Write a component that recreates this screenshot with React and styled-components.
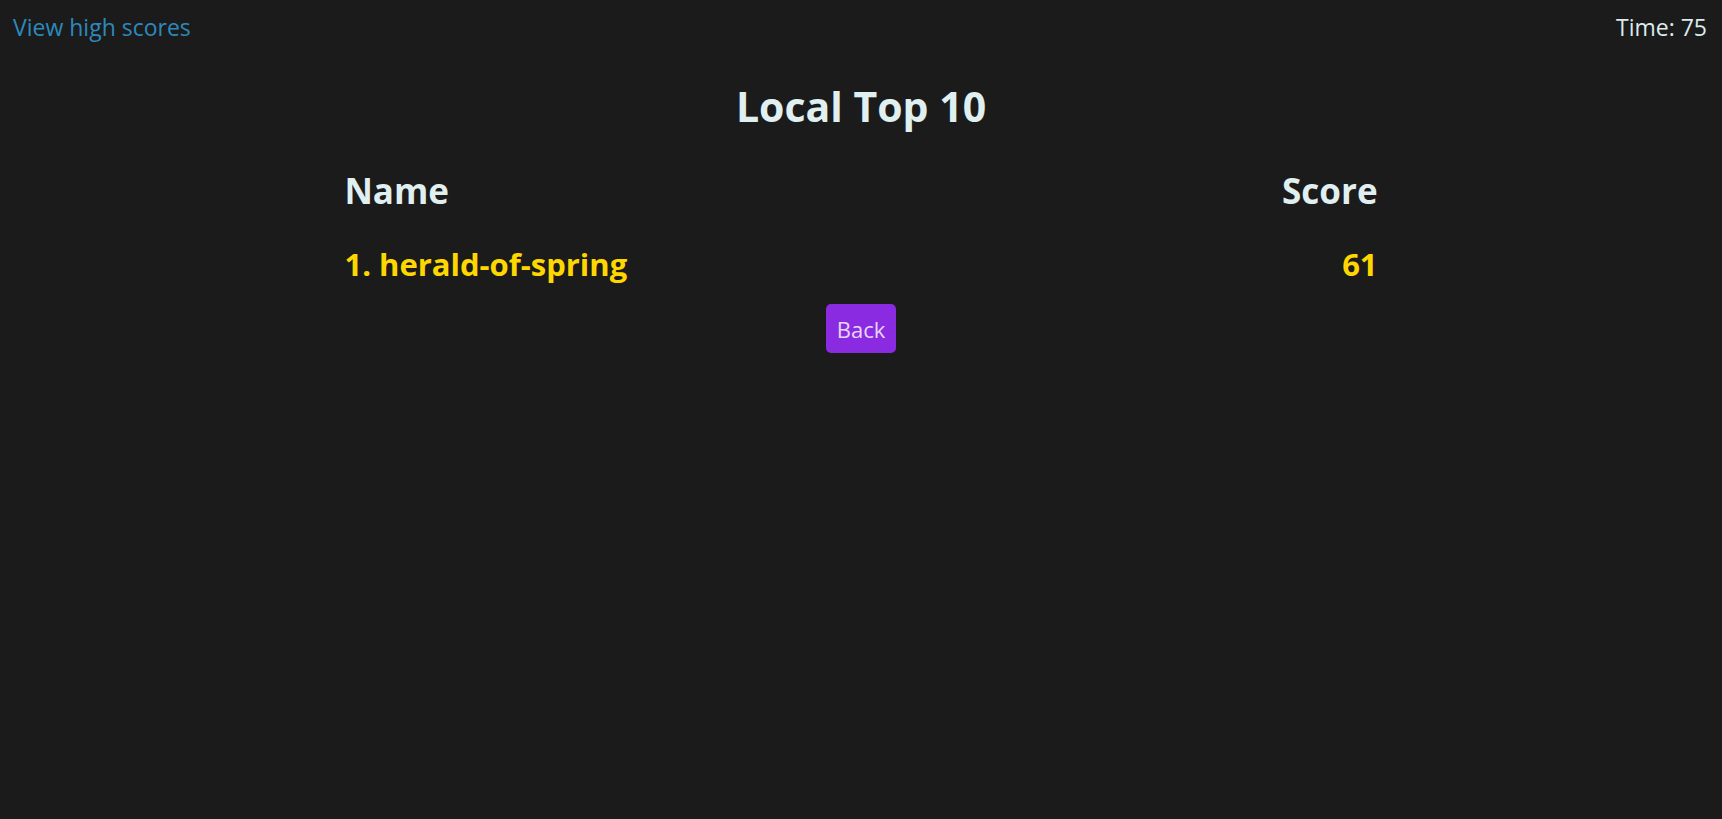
import React from "react";
import styled, { createGlobalStyle } from "styled-components";

const GlobalStyle = createGlobalStyle`
  html, body {
    margin: 0;
    padding: 0;
    background: #1b1b1b;
  }
  body {
    font-family: "Open Sans", "Noto Sans", sans-serif;
    font-size: 23px;
    color: #e0eff0;
  }
`;

const scores = [{ name: "herald-of-spring", score: 61 }];

export default function App() {
  return (
    <>
      <GlobalStyle />
      <Page>
        <TopBar>
          <ScoreLink href="#">View high scores</ScoreLink>
          <Timer>Time: 75</Timer>
        </TopBar>
        <Title>Local Top 10</Title>
        <Table>
          <Row>
            <HeadCell>Name</HeadCell>
            <HeadCell $right>Score</HeadCell>
          </Row>
          {scores.map((s, i) => (
            <Row key={s.name}>
              <EntryCell>
                {i + 1}. {s.name}
              </EntryCell>
              <EntryCell $right>{s.score}</EntryCell>
            </Row>
          ))}
        </Table>
        <Actions>
          <BackButton>Back</BackButton>
        </Actions>
      </Page>
    </>
  );
}

const Page = styled.div`
  min-height: 100vh;
  display: flex;
  flex-direction: column;
`;

const TopBar = styled.header`
  display: flex;
  justify-content: space-between;
  align-items: center;
  padding: 12px 15px 0 13px;
  line-height: 30px;
`;

const ScoreLink = styled.a`
  color: #2d89bd;
  text-decoration: none;
`;

const Timer = styled.span`
  color: #dcebec;
`;

const Title = styled.h1`
  margin: 44px 0 0;
  text-align: center;
  font-size: 41px;
  line-height: 40px;
  font-weight: 700;
`;

const Table = styled.div`
  width: 60%;
  margin: 45px auto 0;
  display: flex;
  flex-direction: column;
  gap: 35px;
`;

const Row = styled.div`
  display: flex;
  justify-content: space-between;
  align-items: baseline;
`;

const HeadCell = styled.span`
  font-size: 35px;
  line-height: 40px;
  font-weight: 700;
  color: #e0eff0;
  text-align: ${(p) => (p.$right ? "right" : "left")};
`;

const EntryCell = styled.span`
  font-size: 31px;
  line-height: 36px;
  font-weight: 700;
  color: #fed700;
  text-align: ${(p) => (p.$right ? "right" : "left")};
`;

const Actions = styled.div`
  display: flex;
  justify-content: center;
  margin-top: 22px;
`;

const BackButton = styled.button`
  font-family: inherit;
  font-size: 22px;
  color: #e6d6f6;
  background: #8a2be2;
  border: none;
  border-radius: 5px;
  width: 70px;
  height: 49px;
  padding: 0;
  cursor: pointer;
`;
